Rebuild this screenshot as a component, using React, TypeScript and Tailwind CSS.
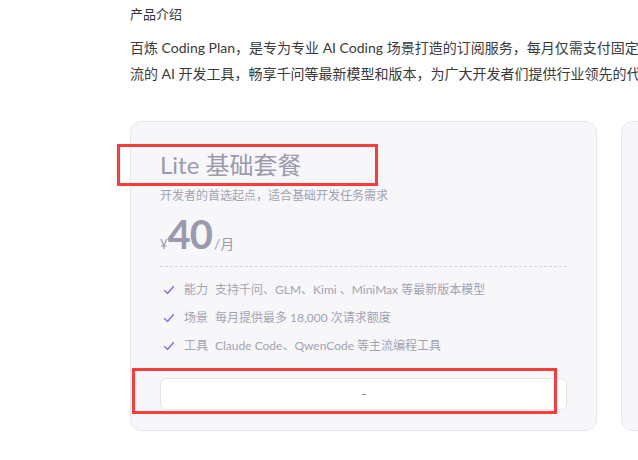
const font = { fontFamily: 'Lato, "Noto Sans CJK SC", sans-serif' };

function Check() {
  return (
    <svg width="12" height="12" viewBox="0 0 12 12" fill="none" className="shrink-0">
      <path d="M1.5 6.5 L4.5 9.5 L10.5 2.5" stroke="#7c6cf0" strokeWidth="1.3" strokeLinecap="round" strokeLinejoin="round" />
    </svg>
  );
}

const features = [
  ["能力", "支持千问、GLM、Kimi 、MiniMax 等最新版本模型"],
  ["场景", "每月提供最多 18,000 次请求额度"],
  ["工具", "Claude Code、QwenCode 等主流编程工具"],
];

export default function App() {
  return (
    <div className="relative w-[638px] h-[460px] overflow-hidden bg-white" style={font}>
      <div className="pl-[130px] pt-[5px] w-[900px]">
        <div className="text-[13px] leading-[18px] text-[#333]">产品介绍</div>
        <p className="mt-[12px] text-[14px] leading-[26px] text-[#3a3a3a] whitespace-nowrap">
          百炼 Coding Plan，是专为专业 AI Coding 场景打造的订阅服务，每月仅需支付固定费用，即可在主
          <br />
          流的 AI 开发工具，畅享千问等最新模型和版本，为广大开发者们提供行业领先的代码生成体验。
        </p>

        <div className="mt-[34px] flex gap-[24px]">
          <div className="w-[467px] h-[310px] shrink-0 rounded-[12px] border border-[#e6e6ee] bg-[#f7f7fa] px-[29px] pt-[27px]">
            <div className="text-[24px] leading-[32px] text-[#9b99ad]">Lite 基础套餐</div>
            <div className="mt-[6px] text-[12px] leading-[18px] text-[#a3a2b3]">开发者的首选起点，适合基础开发任务需求</div>
            <div className="mt-[7px] flex items-baseline text-[#9b99ad]">
              <span className="text-[13px]">¥</span>
              <span className="text-[40px] leading-[44px] font-bold tracking-[-1px]">40</span>
              <span className="ml-[2px] text-[14px]">/月</span>
            </div>
            <div className="mt-[10px] border-t border-dashed border-[#d4d3de]" />
            <div className="mt-[14px] flex flex-col gap-[10px]">
              {features.map(([k, v]) => (
                <div key={k} className="flex items-center h-[18px] text-[12px] text-[#a3a2b3]">
                  <span className="ml-[3px]"><Check /></span>
                  <span className="ml-[9px]">{k}</span>
                  <span className="ml-[7px]">{v}</span>
                </div>
              ))}
            </div>
            <div className="mt-[23px] h-[32px] rounded-[6px] border border-[#e3e3ea] bg-white flex items-center justify-center">
              <span className="block w-[4px] h-px bg-[#8c8aa6]" />
            </div>
          </div>
          <div className="w-[467px] h-[310px] shrink-0 rounded-[12px] border border-[#e6e6ee] bg-[#f7f7fa]" />
        </div>
      </div>

      <div className="absolute left-[117px] top-[144px] w-[261px] h-[42px] border-[3px] border-[#ff3b3b]" />
      <div className="absolute left-[132px] top-[368px] w-[425px] h-[46px] border-[3px] border-[#ff3b3b]" />
    </div>
  );
}
